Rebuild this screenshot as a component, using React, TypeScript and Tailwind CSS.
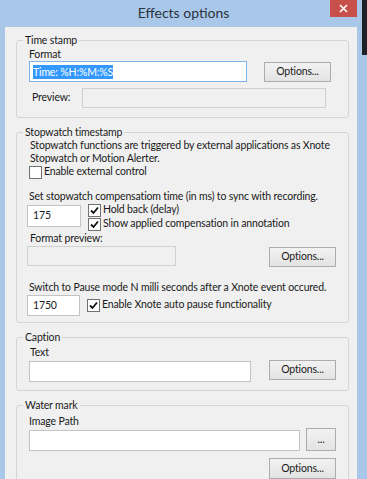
import React from "react";

function Check({ checked }: { checked?: boolean }) {
  return (
    <span className="w-[13px] h-[13px] border border-[#707070] bg-white flex items-center justify-center shrink-0">
      {checked && (
        <svg width="9" height="9" viewBox="0 0 9 9">
          <path d="M1 4.5 L3.5 7 L8 1.5" stroke="#111" strokeWidth="1.8" fill="none" />
        </svg>
      )}
    </span>
  );
}

function Btn({ label, className = "" }: { label: string; className?: string }) {
  return (
    <div
      className={
        "border border-[#acacac] bg-gradient-to-b from-[#f2f2f2] to-[#e3e3e3] flex items-center justify-center text-[#1a1a1a] shrink-0 " +
        className
      }
    >
      {label}
    </div>
  );
}

function Group({ title, className = "", children }: { title: string; className?: string; children: React.ReactNode }) {
  return (
    <fieldset className={"border border-[#d5d5d5] rounded-[3px] w-[333px] ml-[11px] p-0 " + className}>
      <legend className="ml-[6px] px-[2px] leading-[14px]">{title}</legend>
      {children}
    </fieldset>
  );
}

export default function App() {
  return (
    <div className="relative w-[367px] h-[479px] bg-[#a9c8e9] overflow-hidden flex flex-col font-['Lato',sans-serif] text-[10.5px] tracking-[-0.15px] text-[#1a1a1a] whitespace-nowrap">
      <div className="absolute right-0 top-0 w-[5px] h-[55px] bg-[#1e2226]" />
      <div className="h-[27px] shrink-0 relative flex items-center justify-center">
        <span className="text-[14px] tracking-normal text-[#2b3340] leading-none mt-[-2px]">Effects options</span>
        <div className="absolute right-[10px] top-0 w-[27px] h-[17px] bg-[#c7504b] flex items-center justify-center">
          <svg width="9" height="9" viewBox="0 0 9 9">
            <path d="M1 1 L8 8 M8 1 L1 8" stroke="#fff" strokeWidth="1.6" />
          </svg>
        </div>
      </div>
      <div className="flex-1 ml-[5px] w-[352px] bg-[#f0f0f0] flex flex-col">
        {/* Time stamp */}
        <Group title="Time stamp" className="mt-[6px]">
          <div className="pl-[12px] leading-[14px]">Format</div>
          <div className="flex items-start pl-[12px]">
            <div className="w-[218px] h-[21px] bg-white border border-[#7eb4ea] flex items-center pl-[3px]">
              <span className="bg-[#3399ff] text-white leading-[14px]">Time: %H:%M:%S</span>
            </div>
            <Btn label="Options..." className="ml-[17px] mt-[1px] w-[67px] h-[20px]" />
          </div>
          <div className="flex items-center mt-[6px] pb-[9px]">
            <span className="pl-[15px] w-[65px]">Preview:</span>
            <div className="w-[244px] h-[20px] border border-[#cfcfcf] bg-[#f0f0f0]" />
          </div>
        </Group>

        {/* Stopwatch */}
        <Group title="Stopwatch timestamp" className="mt-[7px]">
          <div className="pl-[13px] leading-[13px]">
            Stopwatch functions are triggered by external applications as Xnote
            <br />
            Stopwatch or Motion Alerter.
          </div>
          <div className="flex items-center h-[14px] pl-[12px]">
            <Check />
            <span className="ml-[2px]">Enable external control</span>
          </div>
          <div className="pl-[12px] mt-[11px] leading-[13px]">
            Set stopwatch compensatiom time (in ms) to sync with recording.
          </div>
          <div className="flex items-start pl-[10px]">
            <div className="mt-[2px] w-[54px] h-[22px] bg-white border border-[#c3c3c3] flex items-center pl-[5px]">175</div>
            <div className="ml-[7px] flex flex-col">
              <div className="flex items-center h-[14px]">
                <Check checked />
                <span className="ml-[2px]">Hold back (delay)</span>
              </div>
              <div className="flex items-center h-[14px]">
                <Check checked />
                <span className="ml-[2px]">Show applied compensation in annotation</span>
              </div>
            </div>
          </div>
          <div className="pl-[13px] leading-[14px]">Format preview:</div>
          <div className="flex items-start pl-[10px] mt-[1px]">
            <div className="w-[149px] h-[20px] border border-[#cfcfcf] bg-[#f0f0f0]" />
            <Btn label="Options..." className="ml-[93px] mt-[1px] w-[67px] h-[20px]" />
          </div>
          <div className="pl-[12px] mt-[13px] leading-[14px]">
            Switch to Pause mode N milli seconds after a Xnote event occured.
          </div>
          <div className="flex items-center pl-[10px] pb-[6px]">
            <div className="mt-[1px] w-[53px] h-[21px] bg-white border border-[#c3c3c3] flex items-center pl-[5px]">1750</div>
            <div className="ml-[7px] flex items-center">
              <Check checked />
              <span className="ml-[2px]">Enable Xnote auto pause functionality</span>
            </div>
          </div>
        </Group>

        {/* Caption */}
        <Group title="Caption" className="mt-[7px]">
          <div className="pl-[13px] leading-[14px] mt-[1px]">Text</div>
          <div className="flex items-start pl-[12px] mt-[1px] pb-[8px]">
            <div className="mt-[1px] w-[222px] h-[21px] bg-white border border-[#c3c3c3]" />
            <Btn label="Options..." className="ml-[18px] w-[67px] h-[20px]" />
          </div>
        </Group>

        {/* Water mark */}
        <Group title="Water mark" className="mt-[7px]">
          <div className="pl-[12px] leading-[14px] mt-[2px]">Image Path</div>
          <div className="flex items-start pl-[12px]">
            <div className="mt-[2px] w-[271px] h-[21px] bg-white border border-[#c3c3c3]" />
            <Btn label="..." className="ml-[6px] w-[30px] h-[23px]" />
          </div>
          <div className="flex pl-[252px] mt-[7px] pb-[6px]">
            <Btn label="Options..." className="w-[67px] h-[21px]" />
          </div>
        </Group>
      </div>
    </div>
  );
}
